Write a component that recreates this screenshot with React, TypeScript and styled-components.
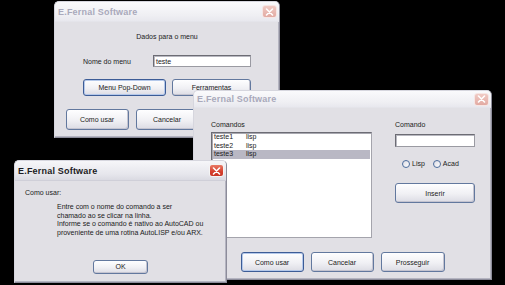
import React from 'react';
import styled, { createGlobalStyle } from 'styled-components';

const GlobalStyle = createGlobalStyle`
  html, body {
    margin: 0;
    padding: 0;
    background: #000;
  }
  * {
    box-sizing: border-box;
  }
`;

const Desktop = styled.div`
  position: relative;
  width: 505px;
  height: 285px;
  overflow: hidden;
  background: #000;
  font-family: 'Liberation Sans', Arial, sans-serif;
  font-size: 7px;
  color: #1a1a1a;
`;

const Frame = styled.div<{ $x: number; $y: number; $w: number; $h: number }>`
  position: absolute;
  left: ${(p) => p.$x}px;
  top: ${(p) => p.$y}px;
  width: ${(p) => p.$w}px;
  height: ${(p) => p.$h}px;
  display: flex;
  flex-direction: column;
  background: #e1e0e5;
  border: 1px solid #d6d6de;
  border-right-color: #8c8c9a;
  border-bottom-color: #8c8c9a;
  border-radius: 5px 5px 0 0;
  box-shadow: inset -1px -1px 0 #b4b4c0;
  overflow: hidden;
`;

const TitleBar = styled.div<{ $h: number; $active?: boolean }>`
  flex: 0 0 ${(p) => p.$h}px;
  display: flex;
  align-items: center;
  justify-content: space-between;
  padding: 0 2px 0 3px;
  background: ${(p) =>
    p.$active
      ? 'linear-gradient(#f6f6f9, #e6e6ec 70%, #dadae2)'
      : 'linear-gradient(#fafafc, #efeff3 70%, #e8e8ee)'};
  border-bottom: 1px solid ${(p) => (p.$active ? '#cfcfd8' : '#e4e4ea')};
`;

const TitleText = styled.span<{ $active?: boolean }>`
  font-size: 9px;
  font-weight: bold;
  letter-spacing: 0.2px;
  color: ${(p) => (p.$active ? '#1c1c24' : '#a9a9bb')};
`;

const CloseButton = styled.div<{ $active?: boolean }>`
  width: 15px;
  height: 13px;
  display: flex;
  align-items: center;
  justify-content: center;
  border-radius: 3px;
  border: 1px solid ${(p) => (p.$active ? '#f4f4f4' : '#f6e6e4')};
  background: ${(p) =>
    p.$active
      ? 'linear-gradient(#e87a66, #d6402e 60%, #c83424)'
      : 'linear-gradient(#f0cac4, #e2aaa2)'};
`;

const Body = styled.div`
  flex: 1;
  display: flex;
  flex-direction: column;
`;

const Heading = styled.div`
  margin-top: 10px;
  line-height: 9px;
  text-align: center;
`;

const FieldRow = styled.div`
  margin-top: 14px;
  display: flex;
  align-items: center;
  height: 12px;
  padding-left: 28px;
`;

const FieldLabel = styled.span`
  width: 70px;
`;

const TextInput = styled.div<{ $w: number; $h: number }>`
  width: ${(p) => p.$w}px;
  height: ${(p) => p.$h}px;
  display: flex;
  align-items: center;
  padding-left: 2px;
  background: #fff;
  border: 1px solid #6c6c74;
  border-right-color: #9a9aa2;
  border-bottom-color: #9a9aa2;
  box-shadow: inset 1px 1px 0 #b8b8c0;
`;

const ButtonRow = styled.div<{ $top: number; $center?: boolean }>`
  margin-top: ${(p) => p.$top}px;
  display: flex;
  gap: ${(p) => (p.$center ? 7 : 6)}px;
  justify-content: ${(p) => (p.$center ? 'center' : 'flex-start')};
  padding-left: ${(p) => (p.$center ? 0 : 28)}px;
`;

const Button = styled.div<{ $w: number; $h: number; $default?: boolean }>`
  width: ${(p) => p.$w}px;
  height: ${(p) => p.$h}px;
  display: flex;
  align-items: center;
  justify-content: center;
  border-radius: 3px;
  border: 1px solid ${(p) => (p.$default ? '#3c5c96' : '#62789e')};
  background: linear-gradient(#fefeff, #f0f0f4 55%, #dcdce4);
  box-shadow: ${(p) =>
    p.$default ? 'inset 0 0 0 1px #b4c8ea' : 'inset -1px -1px 0 #c4c4d0'};
  color: #1a1a1a;
`;

/* janela de comandos */
const Columns = styled.div`
  display: flex;
  gap: 23px;
  padding-left: 17px;
`;

const LeftColumn = styled.div`
  display: flex;
  flex-direction: column;
`;

const RightColumn = styled.div`
  display: flex;
  flex-direction: column;
  width: 80px;
`;

const Label = styled.div<{ $top: number }>`
  margin-top: ${(p) => p.$top}px;
  line-height: 9px;
`;

const ListBox = styled.div`
  margin-top: 3px;
  width: 161px;
  height: 106px;
  padding: 0 1px;
  background: #fff;
  border: 1px solid #6c6c74;
  border-right-color: #a4a4ac;
  border-bottom-color: #a4a4ac;
  box-shadow: inset 1px 1px 0 #a8a8b0;
  display: flex;
  flex-direction: column;
`;

const ListRow = styled.div<{ $selected?: boolean }>`
  height: 8.5px;
  line-height: 8.5px;
  display: flex;
  background: ${(p) => (p.$selected ? '#b9b8c4' : 'transparent')};
`;

const ListCell = styled.span<{ $w?: number }>`
  width: ${(p) => (p.$w ? `${p.$w}px` : 'auto')};
  padding-left: 1px;
`;

const RadioRow = styled.div`
  margin-top: 12px;
  height: 9px;
  display: flex;
  align-items: center;
  padding-left: 7px;
  gap: 8px;
`;

const RadioItem = styled.label`
  display: flex;
  align-items: center;
  gap: 2px;
`;

const RadioCircle = styled.span`
  width: 8px;
  height: 8px;
  border-radius: 50%;
  border: 1px solid #4c6c9c;
  background: linear-gradient(135deg, #dcdce4, #fff);
`;

const ButtonSlot = styled.div<{ $top: number }>`
  margin-top: ${(p) => p.$top}px;
`;

/* janela de ajuda */
const HelpTitle = styled.div`
  margin-top: 7px;
  padding-left: 10px;
  line-height: 9px;
`;

const HelpText = styled.p`
  margin: 6px 0 0;
  padding-left: 42px;
  line-height: 8.7px;
`;

const CenterRow = styled.div`
  margin-top: 22px;
  display: flex;
  justify-content: center;
`;

const CloseGlyph = () => (
  <svg width="9" height="8" viewBox="0 0 9 8">
    <path d="M1.5 1 L7.5 7 M7.5 1 L1.5 7" stroke="#fff" strokeWidth="1.6" strokeLinecap="round" />
  </svg>
);

interface WindowProps {
  x: number;
  y: number;
  w: number;
  h: number;
  titleHeight: number;
  active?: boolean;
  children: React.ReactNode;
}

const Window = ({ x, y, w, h, titleHeight, active, children }: WindowProps) => (
  <Frame $x={x} $y={y} $w={w} $h={h}>
    <TitleBar $h={titleHeight} $active={active}>
      <TitleText $active={active}>E.Fernal Software</TitleText>
      <CloseButton $active={active}>
        <CloseGlyph />
      </CloseButton>
    </TitleBar>
    <Body>{children}</Body>
  </Frame>
);

const commands = [
  { name: 'teste1', type: 'lisp' },
  { name: 'teste2', type: 'lisp' },
  { name: 'teste3', type: 'lisp' },
];

export default function App() {
  return (
    <>
      <GlobalStyle />
      <Desktop>
        <Window x={54} y={1} w={226} h={137} titleHeight={20}>
          <Heading>Dados para o menu</Heading>
          <FieldRow>
            <FieldLabel>Nome do menu</FieldLabel>
            <TextInput $w={98} $h={12}>teste</TextInput>
          </FieldRow>
          <ButtonRow $top={12}>
            <Button $w={83} $h={17} $default>
              Menu Pop-Down
            </Button>
            <Button $w={79} $h={17}>
              Ferramentas
            </Button>
          </ButtonRow>
          <ButtonRow $top={13} $center>
            <Button $w={63} $h={21}>
              Como usar
            </Button>
            <Button $w={63} $h={21}>
              Cancelar
            </Button>
            {/* terceiro botão fica coberto pela janela de comandos */}
            <Button $w={63} $h={21} />
          </ButtonRow>
        </Window>

        <Window x={193} y={90} w={299} h={190} titleHeight={17}>
          <Columns>
            <LeftColumn>
              <Label $top={12}>Comandos</Label>
              <ListBox>
                {commands.map((c, i) => (
                  <ListRow key={c.name} $selected={i === 2}>
                    <ListCell $w={32}>{c.name}</ListCell>
                    <ListCell>{c.type}</ListCell>
                  </ListRow>
                ))}
              </ListBox>
            </LeftColumn>
            <RightColumn>
              <Label $top={12}>Comando</Label>
              <ButtonSlot $top={5}>
                <TextInput $w={80} $h={13} />
              </ButtonSlot>
              <RadioRow>
                <RadioItem>
                  <RadioCircle />
                  Lisp
                </RadioItem>
                <RadioItem>
                  <RadioCircle />
                  Acad
                </RadioItem>
              </RadioRow>
              <ButtonSlot $top={15}>
                <Button $w={80} $h={20}>
                  Inserir
                </Button>
              </ButtonSlot>
            </RightColumn>
          </Columns>
          <ButtonRow $top={14} $center>
            <Button $w={63} $h={20} $default>
              Como usar
            </Button>
            <Button $w={63} $h={20}>
              Cancelar
            </Button>
            <Button $w={64} $h={20}>
              Prosseguir
            </Button>
          </ButtonRow>
        </Window>

        <Window x={14} y={160} w={213} h={123} titleHeight={20} active>
          <HelpTitle>Como usar:</HelpTitle>
          <HelpText>
            Entre com o nome do comando a ser
            <br />
            chamado ao se clicar na linha.
            <br />
            Informe se o comando é nativo ao AutoCAD ou
            <br />
            proveniente de uma rotina AutoLISP e/ou ARX.
          </HelpText>
          <CenterRow>
            <Button $w={55} $h={14}>
              OK
            </Button>
          </CenterRow>
        </Window>
      </Desktop>
    </>
  );
}
